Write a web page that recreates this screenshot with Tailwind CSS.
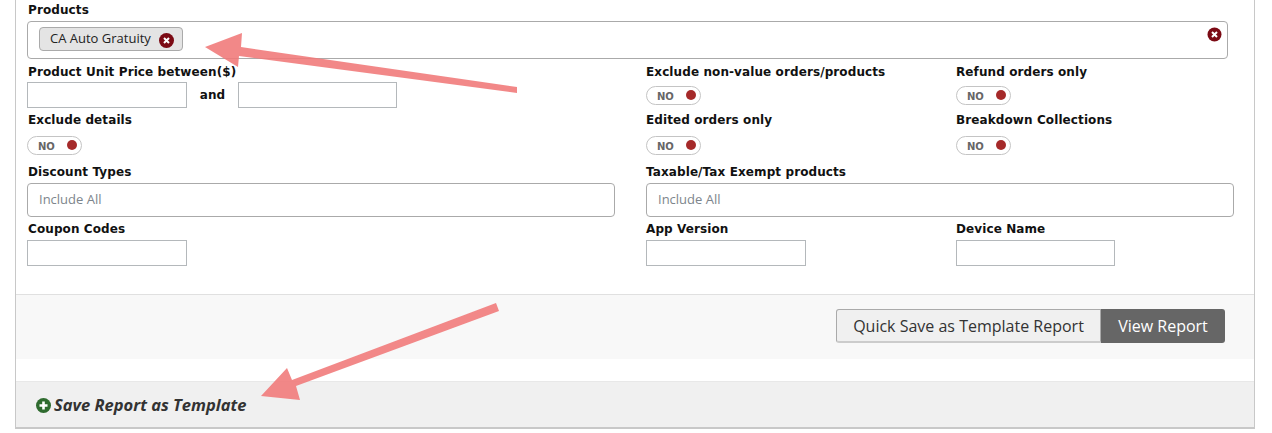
<!DOCTYPE html>
<html lang="en">
<head>
    <meta charset="UTF-8">
    <title>Save Report</title>
    <script src="https://cdn.jsdelivr.net/npm/@tailwindcss/browser@4"></script>
</head>
<body class="bg-white overflow-hidden font-['Open_Sans',sans-serif]">
    <div class="relative w-[1272px] h-[433px] overflow-hidden">
        <!-- Report panel -->
        <div class="ml-[15px] w-[1240px] h-[429px] border-x border-b-2 border-[#c8c8c8] flex flex-col">
            <!-- Filters -->
            <div class="h-[294px] pl-[11px] font-['DejaVu_Sans',sans-serif] text-[12px] tracking-[0.1px] leading-[17px] font-bold text-[#111]">
                <div class="pt-[2px] h-[21px] pl-[1px]">Products</div>
                <div class="relative w-[1201px] h-[38px] border border-[#aaa] rounded-[4px] pl-[11px] pt-[5px]">
                    <div class="w-[144px] h-[24px] bg-[#e4e4e4] border border-[#aaa] rounded-[4px] flex items-center pl-[10px] font-['Open_Sans',sans-serif] text-[13px] tracking-normal font-normal text-[#222]">
                        <span class="mt-[-2px]">CA Auto Gratuity</span>
                        <svg class="ml-[8px] mt-[2px]" width="15" height="15" viewBox="0 0 15 15"><circle cx="7.5" cy="7.5" r="7.5" fill="#7b0a14"/><path d="M5 5l5 5M10 5l-5 5" stroke="#fff" stroke-width="2"/></svg>
                    </div>
                    <svg class="absolute right-[5px] top-[5px]" width="15" height="15" viewBox="0 0 15 15"><circle cx="7.5" cy="7.5" r="7" fill="#7b0a14"/><path d="M5 5l5 5M10 5l-5 5" stroke="#fff" stroke-width="2"/></svg>
                </div>

                <div class="grid grid-cols-[619px_310px_1fr] mt-[5px]">
                    <div>
                        <div class="h-[18px] pl-[1px]">Product Unit Price between($)</div>
                        <div class="flex items-center">
                            <div class="w-[160px] h-[26px] border border-[#b4b8bb]"></div>
                            <span class="w-[51px] text-center">and</span>
                            <div class="w-[159px] h-[26px] border border-[#b4b8bb]"></div>
                        </div>
                    </div>
                    <div>
                        <div class="h-[15px]">Exclude non-value orders/products</div>
                        <div class="mt-[7px] w-[55px] h-[19px] border border-[#c4c4c4] rounded-full flex items-center pl-[10px] text-[10px] tracking-normal text-[#666]"><span class="mt-[1px]">NO</span><span class="ml-auto mr-[4px] mt-[-2px] w-[10px] h-[10px] rounded-full bg-[#a52a2a]"></span></div>
                    </div>
                    <div>
                        <div class="h-[15px]">Refund orders only</div>
                        <div class="mt-[7px] w-[55px] h-[19px] border border-[#c4c4c4] rounded-full flex items-center pl-[10px] text-[10px] tracking-normal text-[#666]"><span class="mt-[1px]">NO</span><span class="ml-auto mr-[4px] mt-[-2px] w-[10px] h-[10px] rounded-full bg-[#a52a2a]"></span></div>
                    </div>
                </div>

                <div class="grid grid-cols-[619px_310px_1fr] mt-[4px]">
                    <div>
                        <div class="h-[15px] pl-[1px]">Exclude details</div>
                        <div class="mt-[9px] w-[55px] h-[19px] border border-[#c4c4c4] rounded-full flex items-center pl-[10px] text-[10px] tracking-normal text-[#666]"><span class="mt-[1px]">NO</span><span class="ml-auto mr-[4px] mt-[-2px] w-[10px] h-[10px] rounded-full bg-[#a52a2a]"></span></div>
                    </div>
                    <div>
                        <div class="h-[15px]">Edited orders only</div>
                        <div class="mt-[9px] w-[55px] h-[19px] border border-[#c4c4c4] rounded-full flex items-center pl-[10px] text-[10px] tracking-normal text-[#666]"><span class="mt-[1px]">NO</span><span class="ml-auto mr-[4px] mt-[-2px] w-[10px] h-[10px] rounded-full bg-[#a52a2a]"></span></div>
                    </div>
                    <div>
                        <div class="h-[15px]">Breakdown Collections</div>
                        <div class="mt-[9px] w-[55px] h-[19px] border border-[#c4c4c4] rounded-full flex items-center pl-[10px] text-[10px] tracking-normal text-[#666]"><span class="mt-[1px]">NO</span><span class="ml-auto mr-[4px] mt-[-2px] w-[10px] h-[10px] rounded-full bg-[#a52a2a]"></span></div>
                    </div>
                </div>

                <div class="grid grid-cols-[619px_1fr] mt-[9px]">
                    <div>
                        <div class="h-[19px] pl-[1px]">Discount Types</div>
                        <div class="w-[588px] h-[34px] border border-[#aaa] rounded-[4px] flex items-center pl-[11px] pb-[2px] font-['Open_Sans',sans-serif] text-[13px] tracking-normal font-normal text-[#7d858c]">Include All</div>
                    </div>
                    <div>
                        <div class="h-[19px]">Taxable/Tax Exempt products</div>
                        <div class="w-[588px] h-[34px] border border-[#aaa] rounded-[4px] flex items-center pl-[11px] pb-[2px] font-['Open_Sans',sans-serif] text-[13px] tracking-normal font-normal text-[#7d858c]">Include All</div>
                    </div>
                </div>

                <div class="grid grid-cols-[619px_310px_1fr] mt-[4px]">
                    <div>
                        <div class="h-[19px] pl-[1px]">Coupon Codes</div>
                        <div class="w-[160px] h-[26px] border border-[#b4b8bb]"></div>
                    </div>
                    <div>
                        <div class="h-[19px]">App Version</div>
                        <div class="w-[160px] h-[26px] border border-[#b4b8bb]"></div>
                    </div>
                    <div>
                        <div class="h-[19px]">Device Name</div>
                        <div class="w-[159px] h-[26px] border border-[#b4b8bb]"></div>
                    </div>
                </div>
            </div>

            <!-- Actions -->
            <div class="h-[65px] border-t border-[#e0e0e0] bg-[#f8f8f8] flex justify-end items-start pt-[14px] pr-[29px]">
                <button class="w-[265px] h-[34px] bg-[#f0f0f0] border border-[#aaa] border-b-2 border-b-[#ccc] rounded-l-[3px] text-[16px] text-[#333]">Quick Save as Template Report</button>
                <button class="w-[124px] h-[34px] bg-[#666] rounded-r-[3px] text-[16px] text-white">View Report</button>
            </div>

            <!-- Template section -->
            <div class="mt-[22px] flex-1 border-t border-[#e8e8e8] bg-[#f0f0f0] flex items-center pl-[20px] pt-[1px]">
                <svg class="mr-[3px]" width="15" height="15" viewBox="0 0 15 15"><circle cx="7.5" cy="7.5" r="7.5" fill="#2f6b2f"/><path d="M7.5 3.5v8M3.5 7.5h8" stroke="#fff" stroke-width="2.6"/></svg>
                <span class="text-[16.5px] font-bold italic text-[#333]">Save Report as Template</span>
            </div>
        </div>

        <!-- Annotation arrows drawn over the screenshot -->
        <svg class="absolute left-0 top-0 pointer-events-none" width="1272" height="433" viewBox="0 0 1272 433">
            <path d="M517 87L517 93L239 56L238 67L205 47L242 33L241 47Z" fill="#f07878" fill-opacity="0.88"/>
            <path d="M496 303L499 311L296 386L300 400L261 396L287 368L292 380Z" fill="#f07878" fill-opacity="0.88"/>
        </svg>
    </div>
</body>
</html>
